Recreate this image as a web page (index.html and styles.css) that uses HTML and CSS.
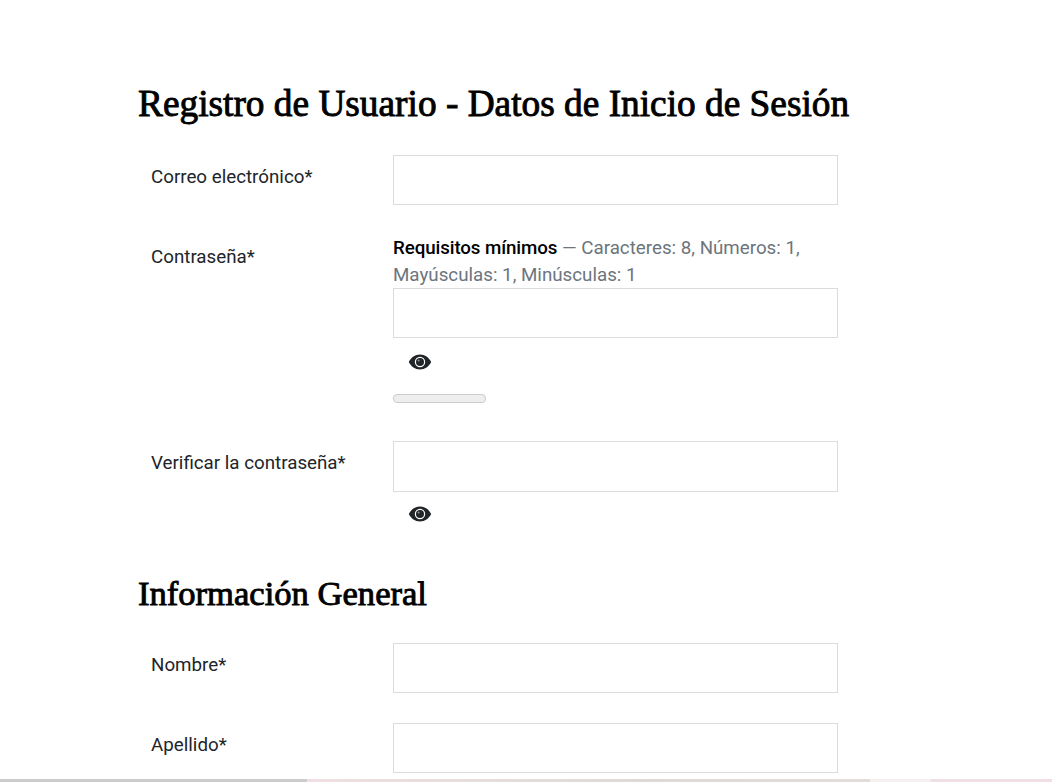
FILE: index.html
```html
<!DOCTYPE html>
<html>
<head>
	<meta charset="UTF-8">
	<title>Registro de Usuario</title>
	<link rel="stylesheet" href="styles.css">
</head>
<body>
	<div class="page">
		<h2 class="title first">Registro de Usuario - Datos de Inicio de Sesión</h2>

		<div class="row">
			<label class="lbl">Correo electrónico*</label>
			<div class="field"><input class="txt" type="text"></div>
		</div>

		<div class="row">
			<label class="lbl">Contraseña*</label>
			<div class="field">
				<p class="hint"><b>Requisitos mínimos</b> — Caracteres: 8, Números: 1, Mayúsculas: 1, Minúsculas: 1</p>
				<input class="txt" type="password">
				<span class="eye">
					<svg width="24" height="16" viewBox="0 0 24 16"><path fill="#212529" fill-rule="evenodd" d="M12 .5C7 .5 3.200 3.400 .8 8 3.200 12.600 7 15.500 12 15.500s8.800-2.900 11.200-7.500C20.800 3.400 17 .5 12 .5zm0 2.300a5.200 5.200 0 1 1 0 10.400 5.200 5.200 0 0 1 0-10.400z"/><circle cx="12" cy="8" r="4" fill="#212529"/><circle cx="10.600" cy="6.600" r="1" fill="#8a9097"/></svg>
				</span>
				<div class="meter"></div>
			</div>
		</div>

		<div class="row">
			<label class="lbl">Verificar la contraseña*</label>
			<div class="field">
				<input class="txt tall" type="password">
				<span class="eye near">
					<svg width="24" height="16" viewBox="0 0 24 16"><path fill="#212529" fill-rule="evenodd" d="M12 .5C7 .5 3.200 3.400 .8 8 3.200 12.600 7 15.500 12 15.500s8.800-2.900 11.200-7.500C20.800 3.400 17 .5 12 .5zm0 2.300a5.200 5.200 0 1 1 0 10.400 5.200 5.200 0 0 1 0-10.400z"/><circle cx="12" cy="8" r="4" fill="#212529"/><circle cx="10.600" cy="6.600" r="1" fill="#8a9097"/></svg>
				</span>
			</div>
		</div>

		<h2 class="title second">Información General</h2>

		<div class="row">
			<label class="lbl">Nombre*</label>
			<div class="field"><input class="txt" type="text"></div>
		</div>

		<div class="row">
			<label class="lbl">Apellido*</label>
			<div class="field"><input class="txt" type="text"></div>
		</div>
	</div>

	<div class="strip">
		<span class="strip_a"></span>
		<span class="strip_b"></span>
		<span class="strip_c"></span>
		<span class="strip_d"></span>
	</div>
</body>
</html>
```

FILE: styles.css
```css
*{
	margin: 0;
	padding: 0;
	box-sizing: border-box;
}
html,body{
	height: 100%;
	overflow: hidden;
}
body{
	background: #fff;
	color: #212529;
	font-family: Roboto, "Liberation Sans", sans-serif;
	font-size: 18.75px;
	line-height: 27px;
	display: flex;
	flex-direction: column;
}
.page{
	height: 779px;
	padding: 80px 0 0 138px;
	overflow: hidden;
}
.title{
	font-family: "Liberation Serif", serif;
	font-weight: 400;
	-webkit-text-stroke: 0.9px #000;
	line-height: 48px;
	color: #000;
}
.title.first{
	font-size: 37.35px;
	margin-bottom: 27px;
}
.title.second{
	font-size: 34.6px;
	margin: 47px 0 26px 0;
}
.row{
	display: grid;
	grid-template-columns: 255px 445px;
	margin-bottom: 30px;
}
.lbl{
	padding: 9px 0 0 13px;
}
.hint{
	color: #6c757d;
	margin-bottom: -1px;
}
.hint b{
	color: #000;
	font-weight: 500;
	letter-spacing: -0.1px;
}
.txt{
	display: block;
	width: 100%;
	height: 50px;
	border: 1px solid #dcdcdc;
	background: #fff;
}
.txt.tall{
	height: 51px;
}
.eye{
	display: block;
	height: 16px;
	margin: 16px 0 0 15px;
	line-height: 0;
}
.eye.near{
	margin-top: 14px;
}
.meter{
	width: 93px;
	height: 9px;
	margin: 24px 0 8px 0;
	background: #eee;
	border: 1px solid #ccc;
	border-radius: 4px;
}
.strip{
	height: 3px;
	display: flex;
}
.strip span{
	display: block;
	height: 3px;
}
.strip_a{
	width: 307px;
	background: #ccc;
}
.strip_b{
	width: 563px;
	background: linear-gradient(to right, #f0dfe2, #dddad6 60%, #e4dcd8);
}
.strip_c{
	width: 61px;
	background: #f5eff0;
}
.strip_d{
	flex: 1;
	background: #f0dfe2;
}
```
